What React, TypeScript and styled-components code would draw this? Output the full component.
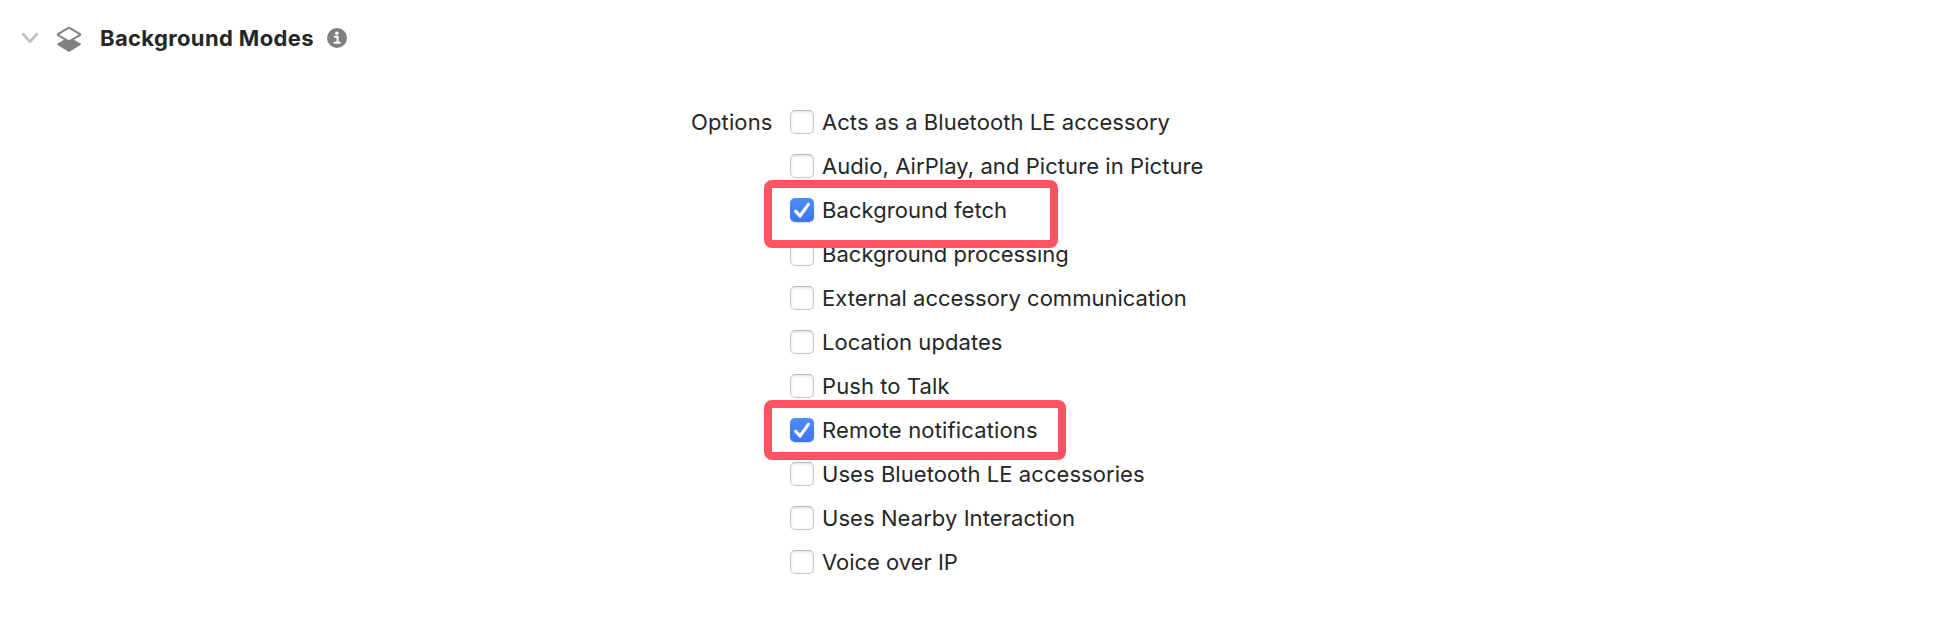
import React from 'react';
import styled, { createGlobalStyle } from 'styled-components';

const GlobalStyle = createGlobalStyle`
  * { box-sizing: border-box; }
  body {
    margin: 0;
    background: #fff;
    color: #262626;
    font-family: Inter, "Liberation Sans", sans-serif;
  }
`;

const Page = styled.main`
  width: 1938px;
  height: 622px;
  overflow: hidden;
`;

const Header = styled.header`
  display: flex;
  align-items: center;
  height: 76px;
  padding-left: 20px;
`;

const Disclosure = styled.svg`
  width: 20px;
  height: 20px;
  margin-right: 15px;
`;

const CapabilityIcon = styled.svg`
  width: 28px;
  height: 28px;
  margin-top: 2px;
  margin-right: 17px;
`;

const Title = styled.h1`
  margin: 0;
  width: 227px;
  font-size: 22px;
  line-height: 28px;
  font-weight: 700;
  letter-spacing: 0.36px;
  white-space: nowrap;
`;

const InfoIcon = styled.svg`
  width: 20px;
  height: 20px;
`;

const Settings = styled.section`
  display: flex;
  padding-top: 24px;
`;

const FieldLabel = styled.div`
  width: 790px;
  padding-right: 17.5px;
  text-align: right;
  font-size: 22px;
  line-height: 44px;
  letter-spacing: 0.12px;
`;

const OptionList = styled.ul`
  margin: 0;
  padding: 0;
  list-style: none;
`;

const OptionRow = styled.li`
  position: relative;
  display: flex;
  align-items: center;
  gap: 8px;
  height: 44px;
`;

const Checkbox = styled.span<{ $checked?: boolean }>`
  display: flex;
  width: 24px;
  height: 24px;
  border-radius: 5px;
  border: ${(p) => (p.$checked ? '0' : '1px solid #c9c9c9')};
  border-top-color: #b9b9b9;
  background: ${(p) => (p.$checked ? 'linear-gradient(#4f8df8, #3c74f5)' : '#fff')};
  box-shadow: ${(p) => (p.$checked ? '0 1px 1px rgba(60, 116, 245, 0.25)' : 'inset 0 1px 3px rgba(0, 0, 0, 0.14)')};
`;

const OptionText = styled.span<{ $tracking: number }>`
  font-size: 22px;
  line-height: 44px;
  letter-spacing: ${(p) => p.$tracking}px;
  white-space: nowrap;
`;

const Highlight = styled.span<{ $width: number; $height: number }>`
  position: absolute;
  z-index: 1;
  top: -8px;
  left: -26px;
  width: ${(p) => p.$width}px;
  height: ${(p) => p.$height}px;
  border: 8px solid #ff5263;
  border-radius: 8px;
`;

interface Option {
  label: string;
  tracking: number;
  checked?: boolean;
  highlight?: { width: number; height: number };
}

const options: Option[] = [
  { label: 'Acts as a Bluetooth LE accessory', tracking: 0.06 },
  { label: 'Audio, AirPlay, and Picture in Picture', tracking: 0.07 },
  { label: 'Background fetch', tracking: 0.07, checked: true, highlight: { width: 294, height: 68 } },
  { label: 'Background processing', tracking: 0.03 },
  { label: 'External accessory communication', tracking: 0.01 },
  { label: 'Location updates', tracking: 0.07 },
  { label: 'Push to Talk', tracking: 0.08 },
  { label: 'Remote notifications', tracking: 0.15, checked: true, highlight: { width: 302, height: 60 } },
  { label: 'Uses Bluetooth LE accessories', tracking: 0.06 },
  { label: 'Uses Nearby Interaction', tracking: 0.07 },
  { label: 'Voice over IP', tracking: -0.02 },
];

const CheckMark = () => (
  <svg width="24" height="24" viewBox="0 0 24 24" fill="none">
    <path d="M5.6 13.1 10 18 18.4 6.4" stroke="#fff" strokeWidth="3.2" strokeLinecap="round" strokeLinejoin="round" />
  </svg>
);

export default function App() {
  return (
    <Page>
      <GlobalStyle />
      <Header>
        <Disclosure viewBox="0 0 20 20" fill="none">
          <path d="M3.2 6.2 10 13.6 16.8 6.2" stroke="#bdbdbd" strokeWidth="2.6" strokeLinecap="round" strokeLinejoin="round" />
        </Disclosure>
        <CapabilityIcon viewBox="0 0 28 28">
          <path d="M14 12 25.4 18.5Q26.8 19.3 25.4 20.1L15 26.4Q14 27 13 26.4L2.6 20.1Q1.2 19.3 2.6 18.5Z" fill="#808080" />
          <path d="M3 9.1 13 3.2Q14 2.6 15 3.2L25 9.1Q25.6 9.6 25 10.1L15 15.8Q14 16.4 13 15.8L3 10.1Q2.4 9.6 3 9.1Z" fill="#fff" stroke="#808080" strokeWidth="2" strokeLinejoin="round" />
        </CapabilityIcon>
        <Title>Background Modes</Title>
        <InfoIcon viewBox="0 0 20 20">
          <circle cx="10" cy="10" r="10" fill="#808080" />
          <circle cx="9.8" cy="5.2" r="1.7" fill="#fff" />
          <path d="M7.8 8.8H10.6V14.6M7.4 14.8H12.8" fill="none" stroke="#fff" strokeWidth="2" strokeLinecap="round" />
        </InfoIcon>
      </Header>
      <Settings>
        <FieldLabel>Options</FieldLabel>
        <OptionList>
          {options.map((option) => (
            <OptionRow key={option.label}>
              <Checkbox $checked={option.checked}>{option.checked && <CheckMark />}</Checkbox>
              <OptionText $tracking={option.tracking}>{option.label}</OptionText>
              {option.highlight && (
                <Highlight $width={option.highlight.width} $height={option.highlight.height} />
              )}
            </OptionRow>
          ))}
        </OptionList>
      </Settings>
    </Page>
  );
}
